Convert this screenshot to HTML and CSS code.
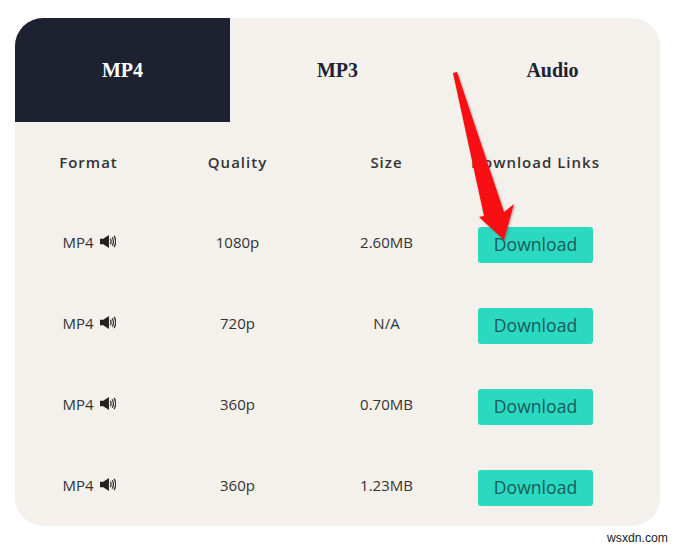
FILE: index.html
```html
<!DOCTYPE html>
<html lang="en">
<head>
<meta charset="utf-8">
<title>Download</title>
<link rel="stylesheet" href="styles.css">
</head>
<body>
<main class="card">
  <nav class="tabs">
    <div class="tab active">MP4</div>
    <div class="tab">MP3</div>
    <div class="tab">Audio</div>
  </nav>
  <section class="table">
    <div class="row head">
      <div>Format</div><div>Quality</div><div>Size</div><div>Download Links</div>
    </div>
    <div class="row">
      <div class="fmt">MP4 <svg class="spk" viewBox="0 0 17 15"><path d="M0 4.5h3.5L9.5 0.5v14l-6-4H0z"/><path class="w" d="M11 4.5q1.5 3 0 6M13 3q2.6 4.5 0 9M15 1.5q3.4 6 0 12"/></svg></div>
      <div>1080p</div><div>2.60MB</div><div><a class="btn">Download</a></div>
    </div>
    <div class="row">
      <div class="fmt">MP4 <svg class="spk" viewBox="0 0 17 15"><path d="M0 4.5h3.5L9.5 0.5v14l-6-4H0z"/><path class="w" d="M11 4.5q1.5 3 0 6M13 3q2.6 4.5 0 9M15 1.5q3.4 6 0 12"/></svg></div>
      <div>720p</div><div>N/A</div><div><a class="btn">Download</a></div>
    </div>
    <div class="row">
      <div class="fmt">MP4 <svg class="spk" viewBox="0 0 17 15"><path d="M0 4.5h3.5L9.5 0.5v14l-6-4H0z"/><path class="w" d="M11 4.5q1.5 3 0 6M13 3q2.6 4.5 0 9M15 1.5q3.4 6 0 12"/></svg></div>
      <div>360p</div><div>0.70MB</div><div><a class="btn">Download</a></div>
    </div>
    <div class="row">
      <div class="fmt">MP4 <svg class="spk" viewBox="0 0 17 15"><path d="M0 4.5h3.5L9.5 0.5v14l-6-4H0z"/><path class="w" d="M11 4.5q1.5 3 0 6M13 3q2.6 4.5 0 9M15 1.5q3.4 6 0 12"/></svg></div>
      <div>360p</div><div>1.23MB</div><div><a class="btn">Download</a></div>
    </div>
  </section>
</main>
<svg class="arrow" viewBox="0 0 680 548"><polygon points="453,73 457,72 504,212 514,204 504,240 479,217 484,216"/></svg>
<div class="mark">wsxdn.com</div>
</body>
</html>
```
FILE: styles.css
```css
html, body { margin: 0; padding: 0; }
body {
  width: 680px;
  height: 548px;
  background: #fff;
  position: relative;
  overflow: hidden;
  padding-top: 18px;
  box-sizing: border-box;
  font-family: "Open Sans", sans-serif;
  color: #333;
}
.card {
  width: 645px;
  height: 508px;
  margin-left: 15px;
  background: #f4f0eb;
  border-radius: 28px;
  overflow: hidden;
}
.tabs { display: grid; grid-template-columns: 215px 215px 215px; height: 104px; }
.tab {
  display: flex;
  align-items: center;
  justify-content: center;
  font: bold 20px "Liberation Serif", serif;
  color: #1e2230;
}
.tab.active { background: #1e2230; color: #fff; }
.table { margin-left: -1px; }
.row {
  display: grid;
  grid-template-columns: repeat(4, 149px);
  height: 81px;
  align-items: center;
  justify-items: center;
  font-size: 15px;
  color: #333;
}
.row.head {
  height: 79px;
  font-weight: 600;
  letter-spacing: 1px;
}
.fmt { display: flex; align-items: center; gap: 6px; margin-left: 1px; }
.spk { width: 16px; height: 15px; margin-top: -1px; }
.spk path { fill: #222; }
.spk path.w { fill: none; stroke: #333; stroke-width: 1.4; }
.btn {
  display: block;
  width: 115px;
  height: 36px;
  margin-top: 7px;
  line-height: 35px;
  text-align: center;
  background: #2bd9c1;
  border-radius: 3px;
  font-size: 17.6px;
  color: #1c5a5a;
}
.arrow { position: absolute; left: 0; top: 0; width: 680px; height: 548px; pointer-events: none; }
.arrow polygon { fill: #f80f14; filter: drop-shadow(1px 1px 1px rgba(120, 60, 60, 0.45)); }
.mark {
  position: absolute;
  right: 12px;
  top: 531px;
  font: 12.2px "Liberation Sans", sans-serif;
  color: #222;
}
```
